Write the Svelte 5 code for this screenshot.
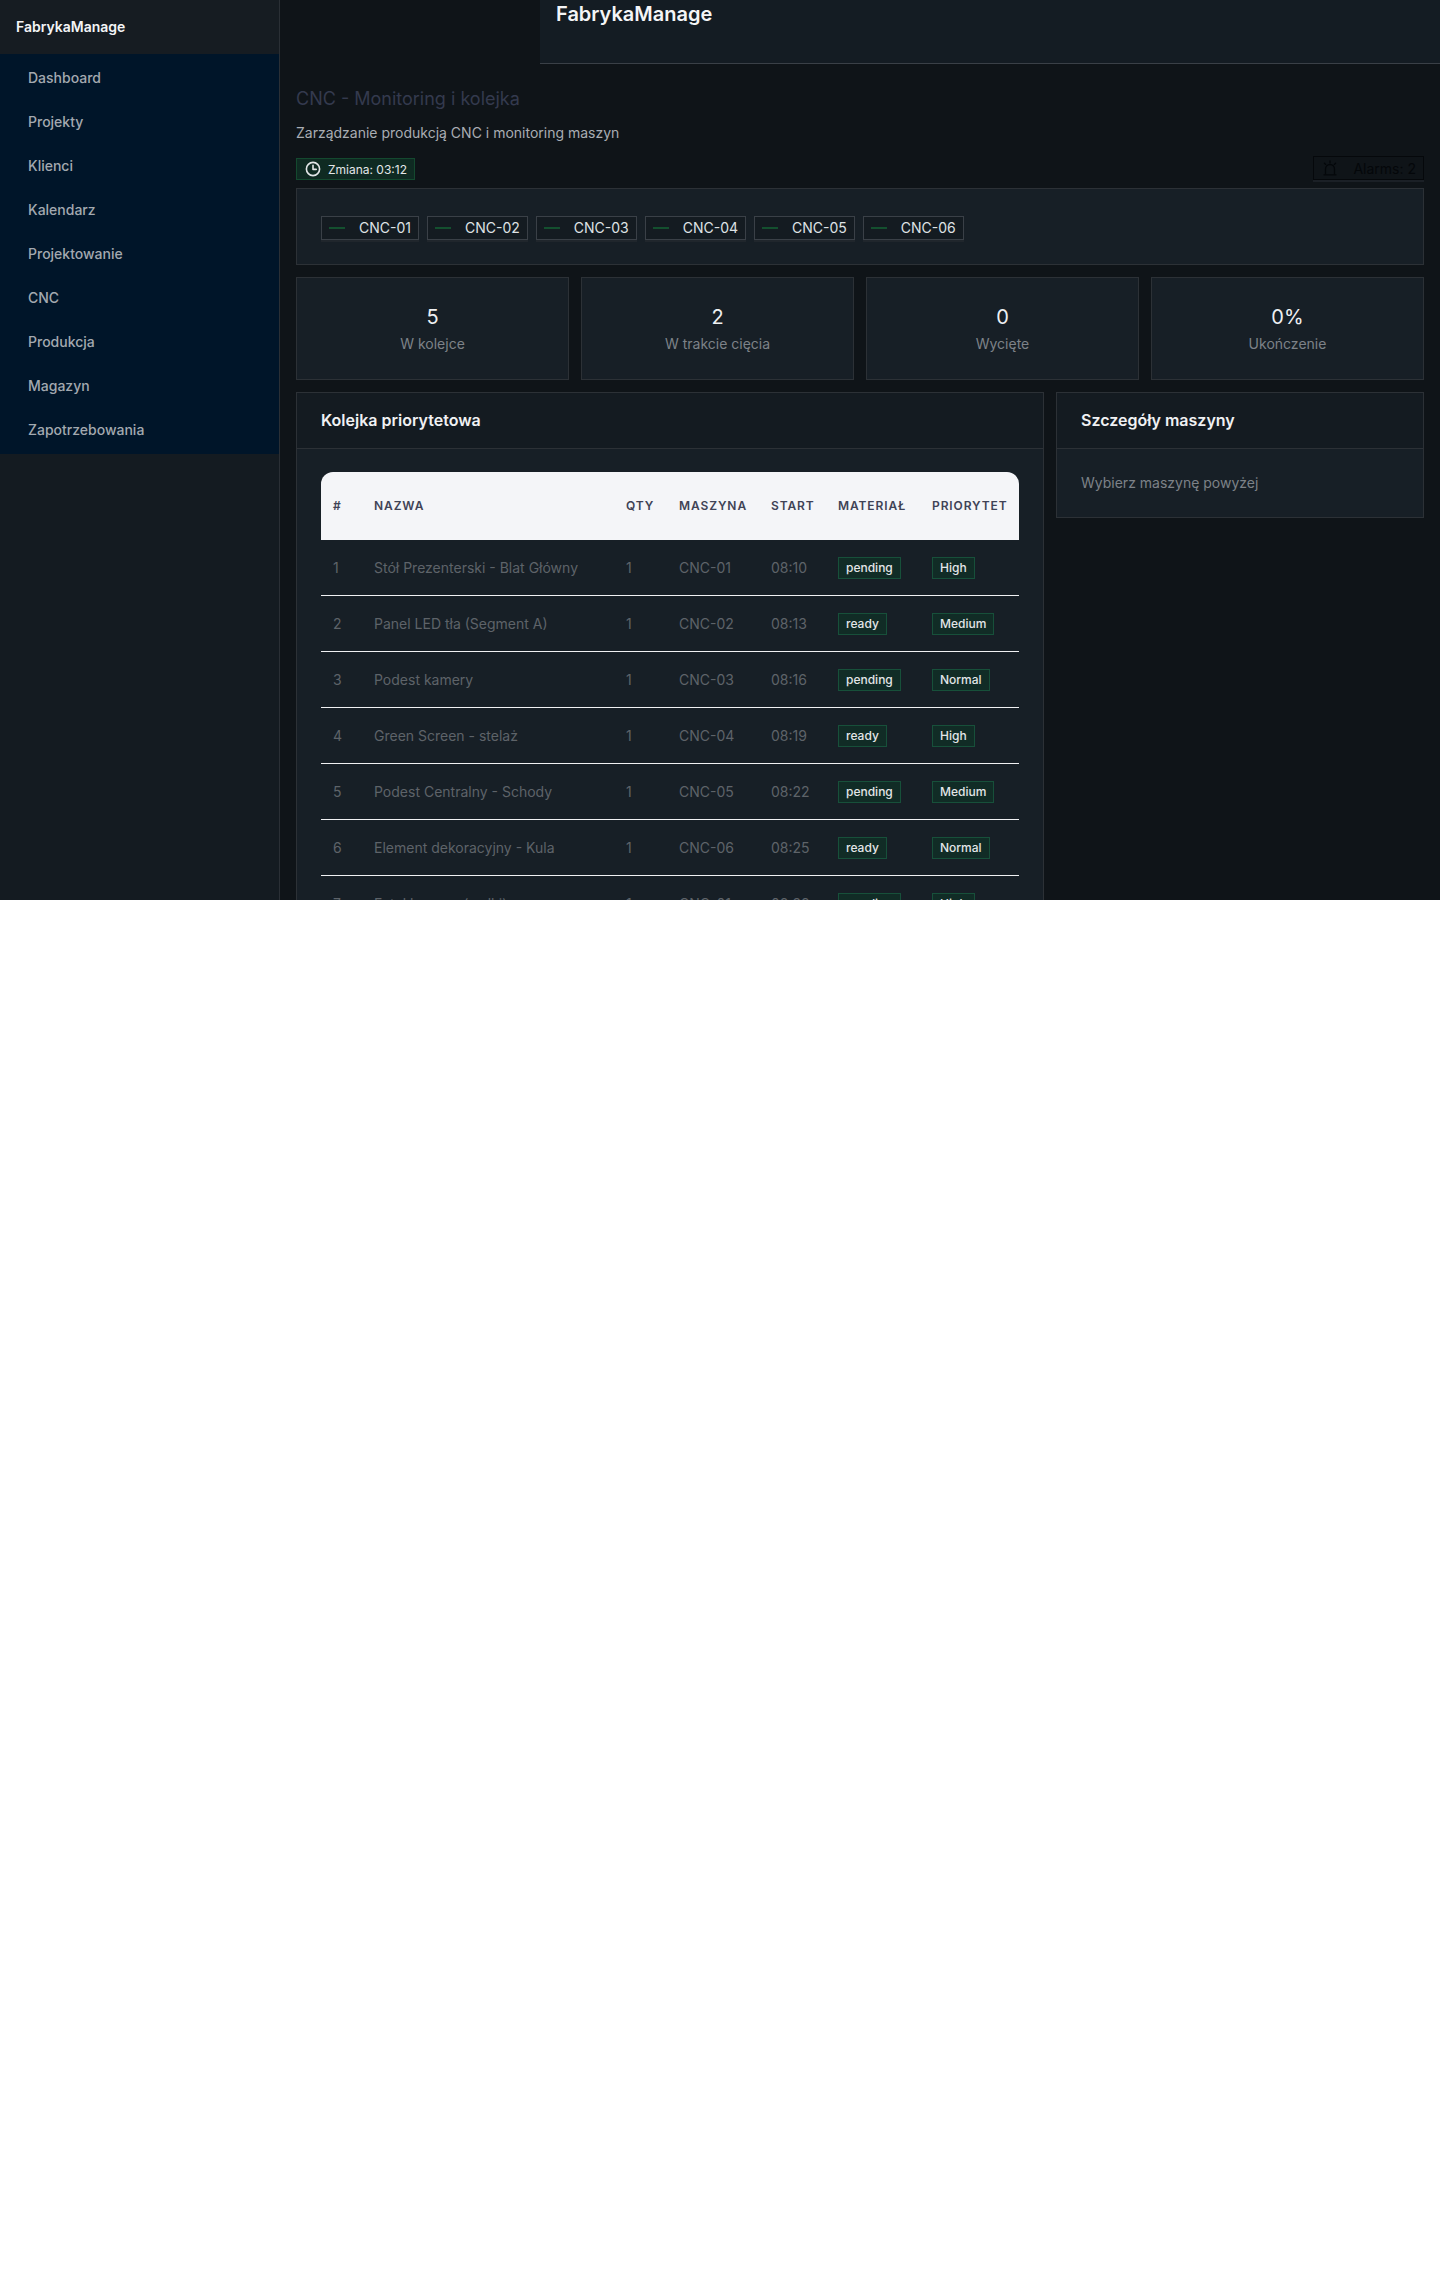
<script>
  const nav = ["Dashboard", "Projekty", "Klienci", "Kalendarz", "Projektowanie", "CNC", "Produkcja", "Magazyn", "Zapotrzebowania"]
  const machines = ["CNC-01", "CNC-02", "CNC-03", "CNC-04", "CNC-05", "CNC-06"]
  const stats = [
    { value: "5", label: "W kolejce" },
    { value: "2", label: "W trakcie cięcia" },
    { value: "0", label: "Wycięte" },
    { value: "0%", label: "Ukończenie" }
  ]
  const queue = [
    { name: "Stół Prezenterski - Blat Główny", cnc: "CNC-01", start: "08:10", mat: "pending", prio: "High" },
    { name: "Panel LED tła (Segment A)", cnc: "CNC-02", start: "08:13", mat: "ready", prio: "Medium" },
    { name: "Podest kamery", cnc: "CNC-03", start: "08:16", mat: "pending", prio: "Normal" },
    { name: "Green Screen - stelaż", cnc: "CNC-04", start: "08:19", mat: "ready", prio: "High" },
    { name: "Podest Centralny - Schody", cnc: "CNC-05", start: "08:22", mat: "pending", prio: "Medium" },
    { name: "Element dekoracyjny - Kula", cnc: "CNC-06", start: "08:25", mat: "ready", prio: "Normal" },
    { name: "Fotel kamery (wałki)", cnc: "CNC-01", start: "08:28", mat: "pending", prio: "High" }
  ]
</script>

<div class="app">
  <aside class="sidebar">
    <div class="brand">FabrykaManage</div>
    <nav class="nav">
      {#each nav as item}
        <div class="nav-item">{item}</div>
      {/each}
    </nav>
  </aside>

  <div class="main">
    <header class="topbar">
      <div class="topbar-title">FabrykaManage</div>
    </header>

    <div class="content">
      <h1>CNC - Monitoring i kolejka</h1>
      <p class="sub">Zarządzanie produkcją CNC i monitoring maszyn</p>

      <div class="badges">
        <span class="shift">
          <svg width="16" height="16" viewBox="0 0 16 16" fill="none" stroke="currentColor" stroke-width="1.6">
            <circle cx="8" cy="8" r="6.6" />
            <path d="M8 4.2V8.4H11.2" stroke-linecap="round" stroke-linejoin="round" />
          </svg>
          Zmiana: 03:12
        </span>
        <span class="alarm">
          <svg width="14" height="16" viewBox="0 0 14 16" fill="none" stroke="currentColor" stroke-width="1.3">
            <path d="M2.5 14.5V9a4.5 4.5 0 0 1 9 0v5.5" />
            <path d="M1 14.8h12M7 1v1.8M1.4 3.2l1.3 1.2M12.6 3.2l-1.3 1.2" stroke-linecap="round" />
          </svg>
          Alarms: 2
        </span>
      </div>

      <section class="machines">
        {#each machines as m}
          <button class="machine"><i class="dash"></i>{m}</button>
        {/each}
      </section>

      <section class="stats">
        {#each stats as s}
          <div class="stat">
            <div class="stat-value">{s.value}</div>
            <div class="stat-label">{s.label}</div>
          </div>
        {/each}
      </section>

      <div class="columns">
        <section class="panel">
          <h2 class="panel-head">Kolejka priorytetowa</h2>
          <div class="panel-body">
            <table>
              <thead>
                <tr>
                  <th class="c-num">#</th>
                  <th class="c-name">Nazwa</th>
                  <th class="c-qty">Qty</th>
                  <th class="c-cnc">Maszyna</th>
                  <th class="c-start">Start</th>
                  <th class="c-mat">Materiał</th>
                  <th>Priorytet</th>
                </tr>
              </thead>
              <tbody>
                {#each queue as row, i}
                  <tr>
                    <td>{i + 1}</td>
                    <td>{row.name}</td>
                    <td>1</td>
                    <td>{row.cnc}</td>
                    <td>{row.start}</td>
                    <td><span class="tag">{row.mat}</span></td>
                    <td><span class="tag">{row.prio}</span></td>
                  </tr>
                {/each}
              </tbody>
            </table>
          </div>
        </section>

        <section class="panel side">
          <h2 class="panel-head">Szczegóły maszyny</h2>
          <div class="panel-body hint">Wybierz maszynę powyżej</div>
        </section>
      </div>
    </div>
  </div>
</div>

<style>
  :global(body) {
    background: #fff;
  }

  .app {
    display: flex;
    height: 900px;
    overflow: hidden;
    background: #0f1418;
    font-family: Inter, "Liberation Sans", sans-serif;
    color: #f4f5f7;
  }

  .sidebar {
    width: 279px;
    flex: none;
    background: #141b21;
    border-right: 1px solid #2a2f35;
  }

  .brand {
    height: 54px;
    display: flex;
    align-items: center;
    padding: 0 0 2px 16px;
    box-sizing: border-box;
    font-size: 14px;
    font-weight: 600;
    background: #161c22;
  }

  .nav {
    background: #001529;
    height: 400px;
    padding-top: 2px;
    box-sizing: border-box;
  }

  .nav-item {
    height: 44px;
    line-height: 44px;
    padding-left: 28px;
    font-size: 14px;
    font-weight: 500;
    color: #a3a9b0;
  }

  .main {
    flex: 1;
    min-width: 0;
  }

  .topbar {
    margin-left: 260px;
    height: 63px;
    background: #141c23;
    border-bottom: 1px solid #3a4047;
    padding-left: 16px;
  }

  .topbar-title {
    font-size: 20px;
    font-weight: 600;
    line-height: 28px;
  }

  .content {
    padding: 21px 16px 0;
  }

  h1 {
    margin: 0;
    font-size: 18px;
    font-weight: 400;
    line-height: 28px;
    color: #343a4e;
  }

  .sub {
    margin: 9px 0 0;
    font-size: 14px;
    line-height: 22px;
    color: #a9adb3;
  }

  .badges {
    display: flex;
    justify-content: space-between;
    align-items: flex-end;
    margin-top: 12px;
    margin-bottom: 8px;
  }

  .shift,
  .alarm {
    display: inline-flex;
    align-items: center;
    font-size: 12px;
    box-sizing: border-box;
  }

  .shift {
    height: 22px;
    gap: 7px;
    padding: 0 7px 0 8px;
    background: #0f2a22;
    border: 1px solid #14492f;
    color: #e3e6e8;
  }

  .alarm {
    height: 24px;
    gap: 16px;
    padding: 0 7px 0 9px;
    border: 1px solid #05080b;
    box-shadow: 0 2px 0 #1b2026;
    color: #04070a;
    font-size: 14px;
  }

  .machines {
    display: flex;
    gap: 8px;
    height: 77px;
    box-sizing: border-box;
    align-items: center;
    padding: 2px 24px 0;
    background: #171f26;
    border: 1px solid #2c3136;
  }

  .machine {
    display: inline-flex;
    align-items: center;
    height: 24px;
    padding: 0 7px;
    background: #141b21;
    border: 1px solid #3a4047;
    box-shadow: 0 2px 0 #20262c;
    border-radius: 0;
    color: #dfe2e5;
    font: 400 14px Inter, "Liberation Sans", sans-serif;
  }

  .dash {
    width: 16px;
    height: 2px;
    margin-right: 14px;
    background: #14502f;
  }

  .stats {
    display: grid;
    grid-template-columns: repeat(4, 1fr);
    gap: 12px;
    margin-top: 12px;
  }

  .stat {
    height: 103px;
    box-sizing: border-box;
    padding-top: 1px;
    display: flex;
    flex-direction: column;
    justify-content: center;
    align-items: center;
    background: #171f26;
    border: 1px solid #2c3136;
  }

  .stat-value {
    font-size: 20px;
    line-height: 28px;
    color: #eef0f2;
  }

  .stat-label {
    margin-top: 2px;
    font-size: 14px;
    line-height: 22px;
    color: #7d8288;
  }

  .columns {
    display: grid;
    grid-template-columns: 748px 1fr;
    gap: 12px;
    margin-top: 12px;
    align-items: start;
  }

  .panel {
    background: #171f26;
    border: 1px solid #2c3136;
  }

  .panel-head {
    margin: 0;
    height: 56px;
    box-sizing: border-box;
    padding: 0 24px 2px;
    display: flex;
    align-items: center;
    background: #141b21;
    border-bottom: 1px solid #2c3136;
    font-size: 16px;
    font-weight: 600;
    color: #f0f1f3;
  }

  .panel-body {
    padding: 23px 24px 24px;
  }

  .hint {
    font-size: 14px;
    line-height: 22px;
    color: #7d8288;
    padding: 23px 24px;
  }

  table {
    width: 100%;
    border-collapse: separate;
    border-spacing: 0;
    table-layout: fixed;
  }

  th {
    height: 68px;
    padding: 0 0 2px 12px;
    box-sizing: border-box;
    background: #f4f5f8;
    color: #3f4356;
    font-size: 12px;
    font-weight: 600;
    letter-spacing: 0.9px;
    text-align: left;
    text-transform: uppercase;
    white-space: nowrap;
  }

  th:first-child {
    border-top-left-radius: 12px;
  }

  th:last-child {
    border-top-right-radius: 12px;
  }

  .c-num { width: 41px; }
  .c-name { width: 252px; }
  .c-qty { width: 53px; }
  .c-cnc { width: 92px; }
  .c-start { width: 67px; }
  .c-mat { width: 94px; }

  td {
    height: 56px;
    padding: 0 0 0 12px;
    box-sizing: border-box;
    border-bottom: 1px solid #f0f1f3;
    font-size: 14px;
    color: #5e6369;
    white-space: nowrap;
  }

  .tag {
    display: inline-block;
    height: 22px;
    line-height: 20px;
    box-sizing: border-box;
    padding: 0 7px;
    background: #112c26;
    border: 1px solid #17503a;
    color: #e3e6e8;
    font-size: 12px;
    font-weight: 500;
    vertical-align: middle;
  }
</style>
